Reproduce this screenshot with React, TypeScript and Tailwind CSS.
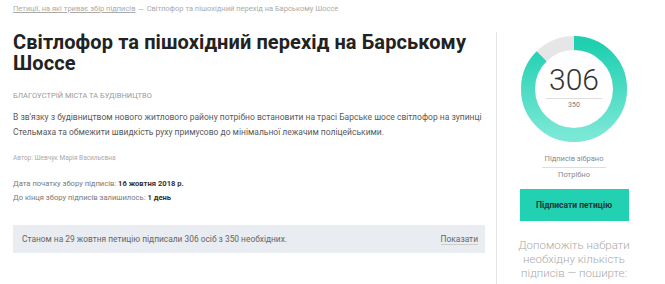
import React from "react";

function Ring() {
  const r = 46;
  const c = 2 * Math.PI * r;
  const pct = 306 / 350;
  return (
    <svg width="106" height="106" viewBox="1 1 106 106">
      <defs>
        <linearGradient id="g" x1="0" y1="0" x2="1" y2="0">
          <stop offset="0%" stopColor="#7ae8d6" />
          <stop offset="100%" stopColor="#1ecfb0" />
        </linearGradient>
      </defs>
      <circle cx="54" cy="54" r={r} fill="none" stroke="#e6e6e6" strokeWidth="14" />
      <circle
        cx="54"
        cy="54"
        r={r}
        fill="none"
        stroke="url(#g)"
        strokeWidth="14"
        strokeDasharray={`${c * pct} ${c}`}
        transform="rotate(-90 54 54)"
      />
    </svg>
  );
}

export default function App() {
  return (
    <div className="w-[665px] h-[284px] overflow-hidden bg-white flex" style={{ fontFamily: "Roboto, 'Noto Sans', sans-serif" }}>
      <div className="w-[496px] shrink-0 pl-[13px] pr-[11px]">
        <div className="pt-[4px] text-[7.5px] leading-[10px] text-[#aaa]">
          <span className="underline">Петиції, на які триває збір підписів</span> → Світлофор та пішохідний перехід на Барському Шоссе
        </div>
        <h1 className="mt-[18px] text-[20px] leading-[21px] font-bold text-[#222] tracking-[0.1px]">
          Світлофор та пішохідний перехід на Барському Шоссе
        </h1>
        <div className="mt-[17px] text-[7.5px] leading-[10px] uppercase text-[#999]">Благоустрій міста та будівництво</div>
        <p className="mt-[9px] mr-[-8px] text-[8.5px] leading-[15px] text-[#5a5a5a]">
          В зв'язку з будівництвом нового житлового району потрібно встановити на трасі Барське шосе світлофор на зупинці Стельмаха та обмежити швидкість руху примусово до мінімальної лежачим поліцейськими.
        </p>
        <div className="mt-[13px] text-[6.5px] leading-[10px] text-[#aaa]">Автор: Шевчук Марія Васильєвна</div>
        <div className="mt-[14px] text-[7.6px] leading-[14px] text-[#777]">
          <div>Дата початку збору підписів: <b className="text-[#333]">16 жовтня 2018 р.</b></div>
          <div>До кінця збору підписів залишилось: <b className="text-[#333]">1 день</b></div>
        </div>
        <div className="mt-[20px] h-[28px] bg-[#e9ecf1] flex items-center justify-between pl-[9px] pr-[7px] text-[8.4px] text-[#666]">
          <span>Станом на 29 жовтня петицію підписали 306 осіб з 350 необхідних.</span>
          <span className="border-b border-[#ccc] leading-[10px]">Показати</span>
        </div>
      </div>
      <div className="flex-1 mt-[32px] border-l border-[#e5e5e5] flex flex-col items-center pr-[14px]">
        <div className="relative mt-[4px]">
          <Ring />
          <div className="absolute inset-0 flex flex-col items-center justify-center">
            <div className="text-[30px] font-light leading-[30px] text-[#333] mt-[-4px]">306</div>
            <div className="w-[56px] border-t border-[#ddd] mt-[3px]" />
            <div className="text-[7px] text-[#777] leading-[10px] mt-[1px]">350</div>
          </div>
        </div>
        <div className="mt-[12px] text-[7.5px] leading-[10px] text-[#888]">Підписів зібрано</div>
        <div className="w-[64px] border-t border-[#ddd] mt-[3px]" />
        <div className="mt-[2px] text-[7.5px] leading-[10px] text-[#888]">Потрібно</div>
        <div className="mt-[9px] w-[109px] h-[32px] bg-[#22d1b2] flex items-center justify-center text-[8.5px] font-bold text-[#1a3a35]">
          Підписати петицію
        </div>
        <div className="mt-[17px] text-[11.5px] leading-[14px] text-[#aaa] text-center w-[120px] font-light">
          Допоможіть набрати необхідну кількість підписів — поширте:
        </div>
      </div>
    </div>
  );
}
